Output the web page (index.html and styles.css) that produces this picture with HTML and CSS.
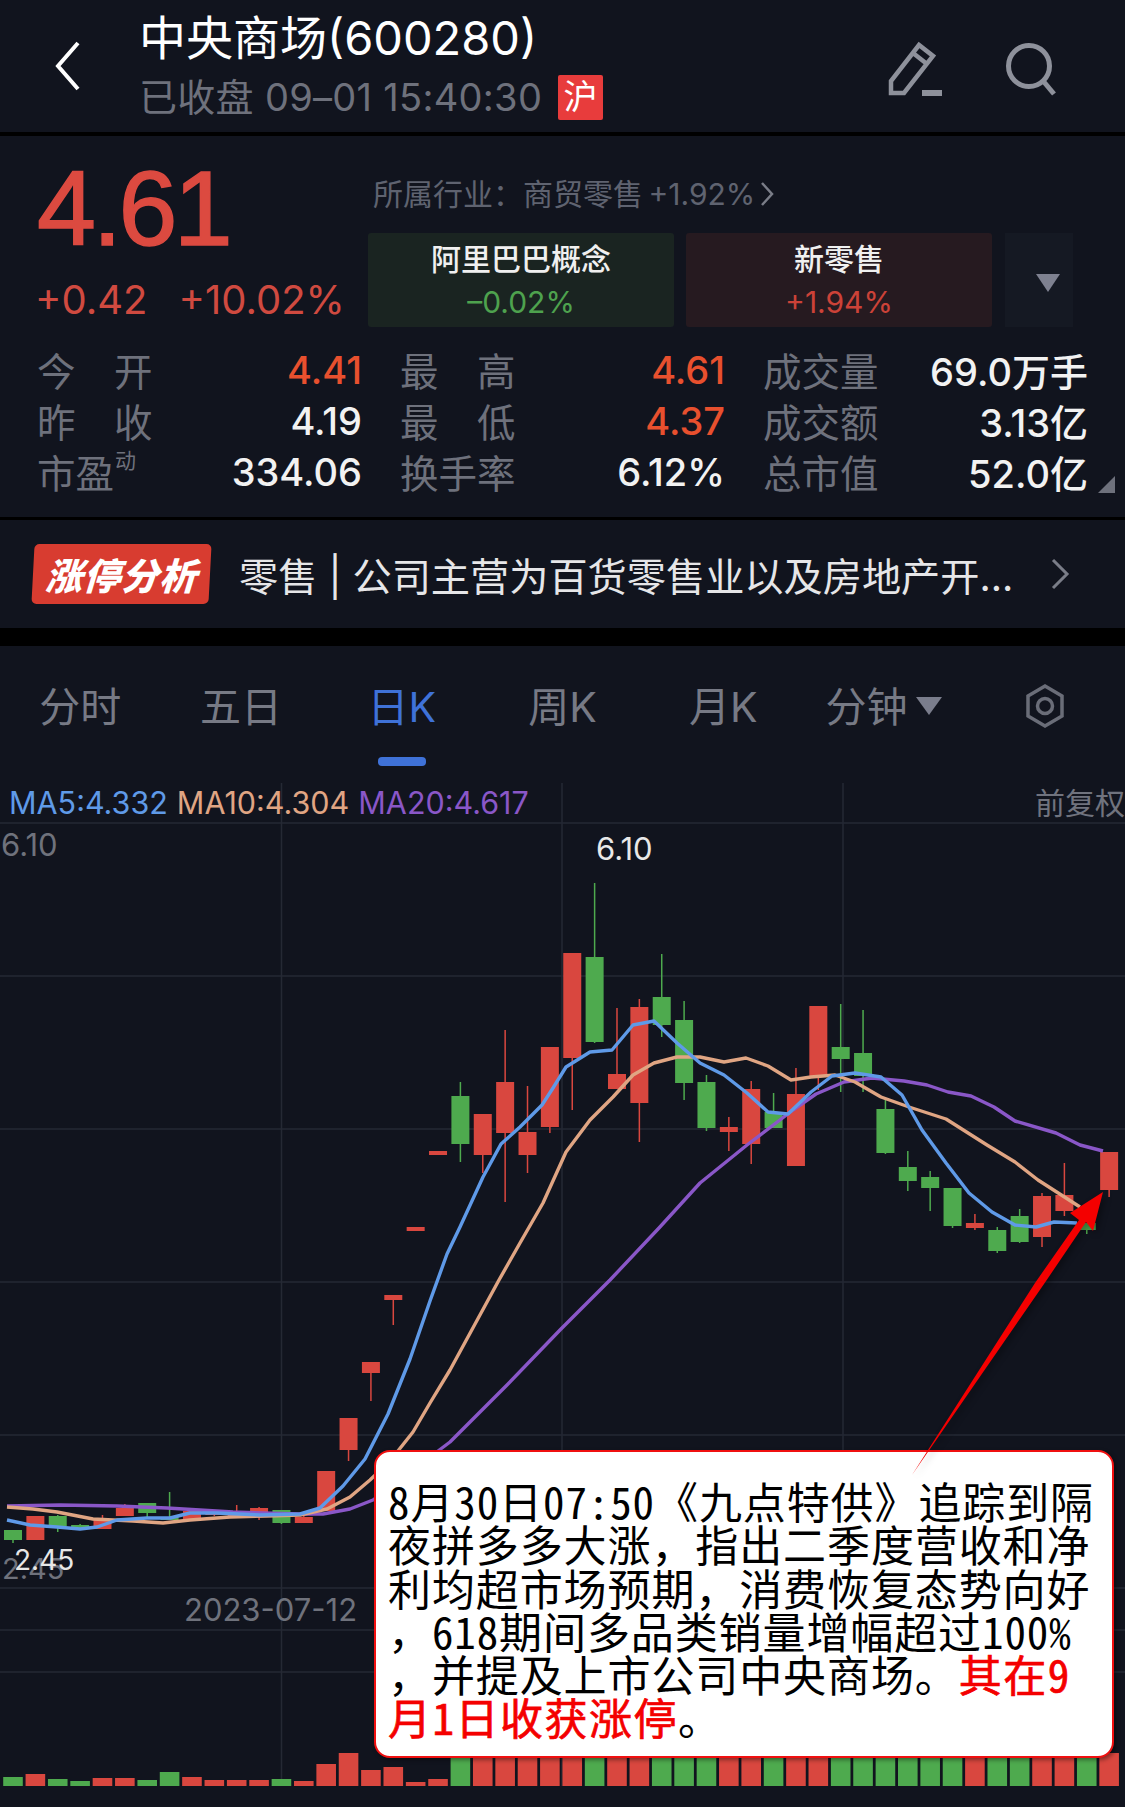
FILE: index.html
```html
<!DOCTYPE html>
<html lang="zh-CN">
<head>
    <meta charset="UTF-8">
    <meta name="viewport" content="width=device-width, initial-scale=1.0">
    <title>中央商场(600280)</title>
    <link rel="stylesheet" href="styles.css">
</head>
<body>
    <!-- Top bar -->
    <header class="topbar">
        <svg class="back-icon" width="26" height="50" viewBox="0 0 26 50"><path d="M23 2 L3 25 L23 48" /></svg>
        <div class="stock-title">
            <div class="stock-name">中央商场(600280)</div>
            <div class="stock-status">
                <span>已收盘 09–01 15:40:30</span>
                <span class="market-badge">沪</span>
            </div>
        </div>
        <svg class="edit-icon" width="56" height="56" viewBox="0 0 56 56"><path d="M3 52 V40 L31 4 L45 15 L16 52 Z M25 12 L39 23" /><path class="edit-line" d="M34 52 H54" /></svg>
        <svg class="search-icon" width="52" height="54" viewBox="0 0 52 54"><circle cx="24" cy="24" r="20.5" /><path d="M39 40 L49 52" /></svg>
    </header>

    <!-- Quote panel -->
    <section class="quote">
        <div class="quote-top">
            <div class="price-box">
                <div class="price">4.61</div>
                <div class="change"><span>+0.42</span><span>+10.02%</span></div>
            </div>
            <div class="sector-box">
                <div class="industry">所属行业：商贸零售 +1.92%
                    <svg width="14" height="26" viewBox="0 0 14 26"><path d="M2 2 L12 13 L2 24" /></svg>
                </div>
                <div class="sector-cards">
                    <div class="sector-card card-down"><b>阿里巴巴概念</b><span>–0.02%</span></div>
                    <div class="sector-card card-up"><b>新零售</b><span>+1.94%</span></div>
                    <div class="sector-more"><i class="tri"></i></div>
                </div>
            </div>
        </div>
        <div class="stats">
            <div class="stat"><span class="label">今　开</span><span class="val up">4.41</span></div>
            <div class="stat"><span class="label">最　高</span><span class="val up">4.61</span></div>
            <div class="stat"><span class="label">成交量</span><span class="val">69.0万手</span></div>
            <div class="stat"><span class="label">昨　收</span><span class="val">4.19</span></div>
            <div class="stat"><span class="label">最　低</span><span class="val up">4.37</span></div>
            <div class="stat"><span class="label">成交额</span><span class="val">3.13亿</span></div>
            <div class="stat"><span class="label">市盈<sup>动</sup></span><span class="val">334.06</span></div>
            <div class="stat"><span class="label">换手率</span><span class="val">6.12%</span></div>
            <div class="stat"><span class="label">总市值</span><span class="val">52.0亿</span></div>
        </div>
        <i class="corner"></i>
    </section>

    <!-- Limit-up banner -->
    <section class="banner">
        <div class="banner-tag"><span>涨停分析</span></div>
        <div class="banner-text">零售 | 公司主营为百货零售业以及房地产开...</div>
        <svg width="20" height="32" viewBox="0 0 20 32"><path d="M3 2 L17 16 L3 30" /></svg>
    </section>

    <!-- Period tabs -->
    <nav class="tabs">
        <div class="tab">分时</div>
        <div class="tab">五日</div>
        <div class="tab active">日K</div>
        <div class="tab">周K</div>
        <div class="tab">月K</div>
        <div class="tab">分钟<i class="tri tab-tri"></i></div>
        <div class="tab">
            <svg width="40" height="46" viewBox="0 0 40 46"><path d="M20 3 L37 13 V33 L20 43 L3 33 V13 Z" /><circle cx="20" cy="23" r="7.5" /></svg>
        </div>
    </nav>

    <!-- K-line chart, drawn by chart.js -->
    <section class="chart">
        <svg id="klines" width="1125" height="1024" viewBox="0 783 1125 1024"></svg>
        <div class="ma-row">
            <span class="ma5">MA5:4.332</span>
            <span class="ma10">MA10:4.304</span>
            <span class="ma20">MA20:4.617</span>
        </div>
        <div class="adjust">前复权</div>
        <span class="axis-label high-axis">6.10</span>
        <span class="peak-label high-peak">6.10</span>
        <span class="axis-label low-axis">2.45</span>
        <span class="peak-label low-peak">2.45</span>
        <span class="axis-label date-axis">2023-07-12</span>

        <div class="note">
            <div>8月30日07:50《九点特供》追踪到隔</div>
            <div>夜拼多多大涨，指出二季度营收和净</div>
            <div>利均超市场预期，消费恢复态势向好</div>
            <div>，618期间多品类销量增幅超过100%</div>
            <div>，并提及上市公司中央商场。<em>其在9</em></div>
            <div><em>月1日收获涨停</em>。</div>
        </div>
        <svg class="arrow" width="1125" height="1024" viewBox="0 783 1125 1024">
            <polygon points="912,1475 1035,1283 1079,1220 1070,1213 1103,1192 1093,1231 1086,1222 1044,1284" />
        </svg>
    </section>

    <script src="chart.js"></script>
</body>
</html>
```

FILE: styles.css
```css
* {
    box-sizing: border-box;
}
body {
    margin: 0;
    width: 1125px;
    height: 1807px;
    overflow: hidden;
    background-color: #000;
    color: #fff;
    font-family: Inter, "Noto Sans CJK SC", sans-serif;
}

/* Top bar */
.topbar {
    height: 132px;
    margin-bottom: 4px;
    background-color: #11141e;
    display: flex;
    align-items: center;
    position: relative;
}
.topbar svg {
    fill: none;
    stroke: #8e919b;
}
.topbar .back-icon {
    stroke: #fff;
    stroke-width: 4;
    margin-left: 55px;
}
.stock-title {
    margin-left: 58px;
    flex: 1;
    padding-top: 6px;
}
.stock-name {
    font-size: 47px;
    line-height: 50px;
    margin-top: -6px;
}
.stock-status {
    display: flex;
    align-items: center;
    margin-top: 12px;
    font-size: 38px;
    line-height: 44px;
    letter-spacing: 0.3px;
    color: #6e717c;
}
.market-badge {
    width: 45px;
    height: 45px;
    margin-left: 16px;
    background-color: #e83c3c;
    color: #fff;
    font-size: 34px;
    line-height: 44px;
    text-align: center;
    border-radius: 2px;
}
.edit-icon {
    stroke-width: 4.5;
    margin-right: 61px;
    margin-top: 6px;
}
.topbar .edit-line {
    stroke-width: 6;
}
.search-icon {
    stroke-width: 5;
    margin-right: 68px;
    margin-top: 6px;
}

/* Quote panel */
.quote {
    height: 381px;
    margin-bottom: 3px;
    background-color: #11141e;
    position: relative;
}
.quote-top {
    display: flex;
    height: 208px;
    padding-left: 37px;
}
.price-box {
    width: 331px;
}
.price {
    font-family: "Liberation Sans", sans-serif;
    font-size: 106px;
    line-height: 104px;
    margin-top: 20px;
    color: #dc4a40;
    letter-spacing: -3.5px;
    -webkit-text-stroke: 1.5px #dc4a40;
}
.change {
    display: flex;
    gap: 31px;
    margin-top: 18px;
    margin-left: -2px;
    font-size: 40px;
    line-height: 44px;
    color: #d04a40;
    white-space: nowrap;
}
.sector-box {
    flex: 1;
}
.industry {
    margin-top: 38px;
    margin-left: 5px;
    display: flex;
    align-items: center;
    gap: 5px;
    font-size: 30px;
    line-height: 40px;
    word-spacing: -3px;
    color: #5f6370;
}
.industry svg {
    fill: none;
    stroke: #7a7d88;
    stroke-width: 2.5;
}
.sector-cards {
    display: flex;
    gap: 12px;
    margin-top: 19px;
}
.sector-card {
    width: 306px;
    height: 94px;
    padding-top: 2px;
    border-radius: 3px;
    display: flex;
    flex-direction: column;
    align-items: center;
    justify-content: center;
    font-size: 30px;
    line-height: 43px;
}
.sector-card b {
    font-weight: 500;
    color: #f0f0f0;
}
.card-down {
    background-color: #1a2421;
}
.card-down span {
    color: #4ea24e;
}
.card-up {
    background-color: #261a20;
}
.card-up span {
    color: #cc4238;
}
.sector-more {
    width: 68px;
    height: 94px;
    margin-left: 1px;
    background-color: #151923;
    display: flex;
    align-items: center;
    justify-content: center;
}
.tri {
    width: 0;
    height: 0;
    border-left: 12px solid transparent;
    border-right: 12px solid transparent;
    border-top: 18px solid #7e8190;
    display: inline-block;
}
.sector-more .tri {
    margin-left: 18px;
    margin-top: 6px;
}
.stats {
    display: grid;
    grid-template-columns: repeat(3, 325px);
    column-gap: 38px;
    grid-auto-rows: 51px;
    padding-left: 37px;
    margin-top: 1px;
}
.stat {
    display: flex;
    justify-content: space-between;
    align-items: center;
    font-size: 38.5px;
    white-space: nowrap;
}
.label {
    color: #6e717c;
    position: relative;
    top: -2px;
}
.label sup {
    position: absolute;
    top: 6px;
    left: 78px;
    font-size: 21px;
    line-height: 24px;
}
.val {
    color: #f2f2f2;
    font-weight: 500;
    font-size: 38px;
    position: relative;
    top: -1px;
}
.val.up {
    color: #e8502e;
}
.corner {
    position: absolute;
    right: 10px;
    bottom: 24px;
    width: 0;
    height: 0;
    border-left: 17px solid transparent;
    border-bottom: 17px solid #6e717c;
}

/* Banner */
.banner {
    height: 108px;
    margin-bottom: 18px;
    background-color: #11141e;
    display: flex;
    align-items: center;
    padding-left: 33px;
}
.banner-tag {
    width: 177px;
    height: 60px;
    background-color: #d83c30;
    border-radius: 5px;
    transform: skewX(-3deg);
    display: flex;
    align-items: center;
    justify-content: center;
}
.banner-tag span {
    font-size: 37px;
    font-weight: 900;
    letter-spacing: 1px;
    font-style: italic;
    white-space: nowrap;
}
.banner-text {
    margin-left: 29px;
    width: 811px;
    font-size: 39.2px;
    color: #e6e6e8;
    white-space: nowrap;
}
.banner svg {
    fill: none;
    stroke: #7a7d88;
    stroke-width: 3;
    margin-left: 0;
}

/* Tabs */
.tabs {
    height: 137px;
    background-color: #11141e;
    display: flex;
    padding-bottom: 21px;
}
.tab {
    flex: 1;
    position: relative;
    display: flex;
    align-items: center;
    justify-content: center;
    font-size: 41px;
    color: #777a85;
    white-space: nowrap;
}
.tab.active {
    color: #3f72d8;
}
.tab.active::after {
    content: "";
    position: absolute;
    left: 57px;
    bottom: -4px;
    width: 48px;
    height: 9px;
    border-radius: 4px;
    background-color: #3f72d8;
}
.tab-tri {
    margin-left: 9px;
    margin-top: 4px;
    border-left-width: 13px;
    border-right-width: 13px;
    border-top-color: #7a7d8c;
}
.tab svg {
    fill: none;
    stroke: #6a6d78;
    stroke-width: 3.5;
    margin-top: 3px;
}

/* Chart */
.chart {
    height: 1024px;
    background-color: #11141e;
    position: relative;
}
#klines {
    display: block;
}
.ma-row {
    position: absolute;
    left: 9px;
    top: 1px;
    font-size: 30.5px;
    line-height: 38px;
    display: flex;
    gap: 9px;
    white-space: nowrap;
}
.ma5 {
    color: #5f9ae8;
}
.ma10 {
    color: #e0a583;
}
.ma20 {
    color: #8a57c8;
}
.adjust {
    position: absolute;
    right: 0;
    top: 1px;
    font-size: 30px;
    line-height: 38px;
    color: #70737e;
}
.axis-label,
.peak-label {
    position: absolute;
    font-size: 31px;
    line-height: 34px;
    white-space: nowrap;
}
.axis-label {
    color: #6f727c;
}
.peak-label {
    color: #e8e8e8;
}
.high-axis {
    left: 1px;
    top: 45px;
}
.high-peak {
    left: 596px;
    top: 49px;
}
.axis-label.low-axis {
    left: 2px;
    top: 769px;
    font-size: 29px;
}
.peak-label.low-peak {
    left: 14px;
    top: 760px;
    font-size: 28px;
}
.date-axis {
    left: 184px;
    top: 810px;
}
.note {
    position: absolute;
    left: 374px;
    top: 667px;
    width: 740px;
    height: 308px;
    padding: 27px 0 0 12px;
    background-color: #fff;
    border: 2px solid #f01010;
    border-radius: 16px;
    box-shadow: 2px 2px 4px rgba(0, 0, 0, 0.4);
    color: #000;
    font-family: "Noto Sans Mono CJK SC", "Noto Sans CJK SC", sans-serif;
    font-size: 43px;
    letter-spacing: 0.9px;
    line-height: 43.3px;
    white-space: nowrap;
}
.note em {
    font-style: normal;
    letter-spacing: 1.5px;
    color: #f40000;
    -webkit-text-stroke: 0.7px #f40000;
}
.arrow {
    position: absolute;
    left: 0;
    top: 0;
    filter: drop-shadow(3px 3px 3px rgba(0, 0, 0, 0.35));
}
.arrow polygon {
    fill: #f40000;
}
```

FILE: chart.js
```js
// Candles: [index, open-colour, body top, body bottom, wick top, wick bottom]
const candles = [
    [0, "g", 1530, 1540, 1530, 1543], [1, "r", 1516, 1540, 1516, 1540], [2, "g", 1516, 1526, 1515, 1532],
    [3, "g", 1525, 1529, 1524, 1530], [4, "r", 1520, 1529, 1515, 1529], [5, "r", 1508, 1516, 1504, 1516],
    [6, "g", 1503, 1513, 1503, 1518], [7, "g", 1517, 1520, 1492, 1520], [8, "r", 1511, 1520, 1510, 1520],
    [9, "r", 1512, 1515, 1512, 1516], [10, "r", 1512, 1516, 1505, 1516], [11, "r", 1508, 1515, 1507, 1520],
    [12, "g", 1510, 1523, 1510, 1524], [13, "r", 1517, 1523, 1514, 1523], [14, "r", 1471, 1511, 1471, 1511],
    [15, "r", 1418, 1450, 1418, 1461], [16, "r", 1362, 1373, 1362, 1401], [17, "r", 1295, 1300, 1295, 1325],
    [18, "r", 1227, 1231, 1227, 1231], [19, "r", 1151, 1155, 1151, 1155], [20, "g", 1096, 1144, 1082, 1162],
    [21, "r", 1114, 1155, 1114, 1173], [22, "r", 1082, 1133, 1030, 1202], [23, "r", 1132, 1155, 1086, 1173],
    [24, "r", 1047, 1127, 1047, 1133], [25, "r", 953, 1058, 953, 1110], [26, "g", 957, 1042, 883, 1043],
    [27, "r", 1074, 1089, 1008, 1089], [28, "r", 1007, 1103, 999, 1142], [29, "g", 997, 1025, 954, 1037],
    [30, "g", 1020, 1083, 1001, 1100], [31, "g", 1082, 1128, 1075, 1131], [32, "r", 1127, 1132, 1117, 1151],
    [33, "r", 1089, 1144, 1081, 1164], [34, "g", 1112, 1128, 1093, 1128], [35, "r", 1094, 1166, 1068, 1166],
    [36, "r", 1006, 1076, 1006, 1090], [37, "g", 1047, 1059, 1004, 1092], [38, "g", 1053, 1076, 1010, 1092],
    [39, "g", 1109, 1153, 1100, 1154], [40, "g", 1167, 1181, 1151, 1191], [41, "g", 1177, 1188, 1171, 1211],
    [42, "g", 1188, 1226, 1188, 1228], [43, "r", 1223, 1228, 1214, 1230], [44, "g", 1230, 1251, 1227, 1253],
    [45, "g", 1216, 1242, 1209, 1243], [46, "r", 1196, 1237, 1193, 1247], [47, "r", 1195, 1211, 1163, 1216],
    [48, "g", 1223, 1230, 1223, 1234], [49, "r", 1152, 1190, 1152, 1197],
];

// Volume bar tops, same order as the candles (bottoms all sit on 1786)
const volumes = [
    1777, 1774, 1779, 1781, 1778, 1778, 1780, 1772, 1777, 1780, 1780, 1780, 1779, 1781, 1764, 1753, 1770, 1767, 1782, 1779,
    1750, 1750, 1750, 1750, 1750, 1750, 1750, 1750, 1750, 1750, 1750, 1750, 1750, 1750, 1750, 1750, 1750, 1750, 1750, 1750,
    1750, 1750, 1750, 1750, 1750, 1750, 1750, 1750, 1750, 1753,
];

const ma5 = "7,1520 30,1525 57,1527 80,1529 97,1527 117,1520 147,1518 170,1518 190,1513 217,1513 260,1515 300,1514 320,1508 343,1486 365,1459 388,1414 410,1359 430,1301 447,1254 460,1227 483,1177 501,1144 520,1127 542,1105 553,1088 566,1067 590,1052 612,1050 633,1025 654,1021 677,1043 700,1063 724,1075 747,1093 768,1112 788,1114 811,1092 832,1076 855,1073 881,1077 902,1095 922,1130 946,1163 969,1193 992,1212 1015,1225 1036,1227 1054,1222 1077,1223";
const ma10 = "7,1507 33,1509 57,1512 93,1519 133,1521 163,1523 190,1520 230,1517 267,1516 300,1515 327,1509 350,1497 370,1480 390,1461 413,1432 430,1403 450,1370 499,1280 520,1243 543,1203 566,1152 590,1120 613,1097 633,1075 654,1063 677,1057 700,1057 724,1062 746,1058 768,1066 791,1080 811,1077 835,1075 855,1082 881,1097 909,1107 946,1119 987,1145 1015,1162 1038,1180 1080,1207";
const ma20 = "7,1506 60,1505 117,1506 167,1508 233,1512 300,1514 323,1514 350,1509 373,1500 450,1442 507,1385 560,1330 610,1280 659,1228 700,1183 747,1145 793,1110 816,1094 844,1082 872,1078 904,1081 927,1085 948,1092 971,1096 994,1107 1015,1121 1056,1133 1080,1145 1103,1151";

const colours = { r: "#d9473f", g: "#4eaa4e" };
const pitch = 22.37;
const centre = (i) => 13 + pitch * i;

let svg = "";

// grid
[823, 976, 1129, 1282, 1435, 1588, 1630, 1672].forEach((y) => {
    svg += `<line x1="0" x2="1125" y1="${y}" y2="${y}" stroke="#252934" stroke-width="1.5"/>`;
});
[281.5, 562, 843].forEach((x) => {
    svg += `<line x1="${x}" x2="${x}" y1="783" y2="1786" stroke="#252934" stroke-width="1.5"/>`;
});

// volume
volumes.forEach((top, i) => {
    const colour = colours[candles[i][1]];
    svg += `<rect x="${centre(i) - 9.8}" y="${top}" width="19.6" height="${1786 - top}" fill="${colour}"/>`;
});

// candles
candles.forEach(([i, c, top, bottom, wickTop, wickBottom]) => {
    const x = centre(i);
    svg += `<rect x="${x - 0.75}" y="${wickTop}" width="1.5" height="${wickBottom - wickTop}" fill="${colours[c]}"/>`;
    svg += `<rect x="${x - 9}" y="${top}" width="18" height="${bottom - top}" fill="${colours[c]}"/>`;
});

// moving averages
[[ma20, "#8a57c8"], [ma10, "#e0a583"], [ma5, "#5f9ae8"]].forEach(([points, colour]) => {
    svg += `<polyline points="${points}" fill="none" stroke="${colour}" stroke-width="3.4" stroke-linejoin="round"/>`;
});

document.getElementById("klines").innerHTML = svg;
```
